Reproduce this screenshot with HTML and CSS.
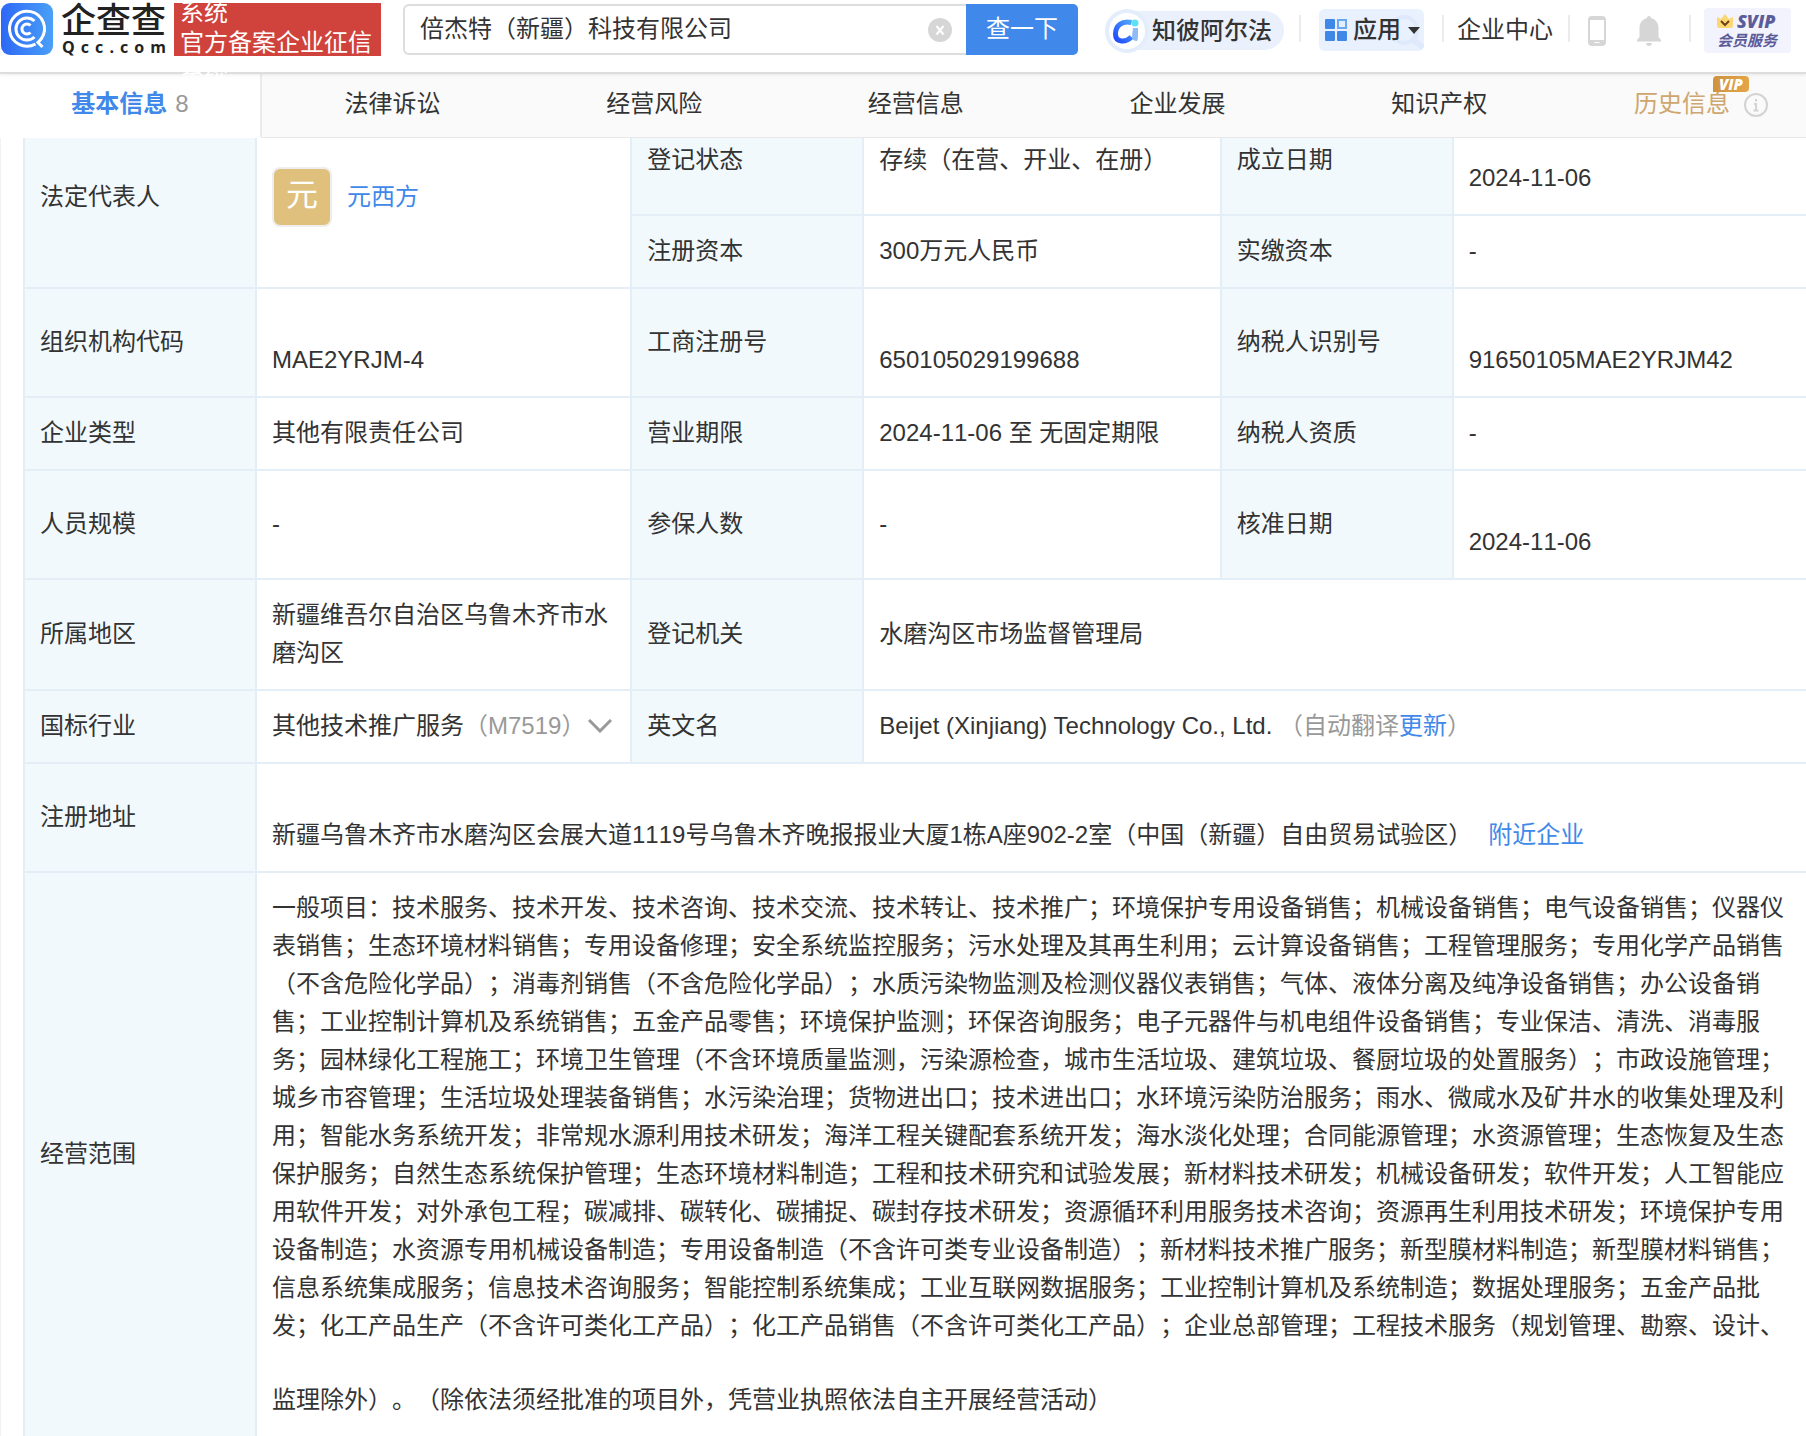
FILE: index.html
```html
<!DOCTYPE html>
<html lang="zh-CN">
<head>
<meta charset="utf-8">
<meta name="viewport" content="width=device-width, initial-scale=1">
<title>倍杰特（新疆）科技有限公司 - 企查查</title>
<link rel="stylesheet" href="styles.css">
</head>
<body>
<div class="page">
  <header class="topbar">
    <a class="logo" href="#" aria-label="企查查">
      <svg class="logo-mark" viewBox="0 0 52 52" aria-hidden="true">
        <defs><linearGradient id="lg" x1="0" y1="0" x2="1" y2="0"><stop offset="0" stop-color="#2e68f6"/><stop offset="1" stop-color="#4aa0f7"/></linearGradient></defs>
        <rect width="52" height="52" rx="9" fill="url(#lg)"/>
        <g fill="none" stroke="#fff" stroke-width="3">
          <path d="M34.500 41 A17.500 17.500 0 1 1 40.500 35.500 L37 39.500 L41.500 44"/>
          <path d="M33.500 18 A11 11 0 1 0 33.500 34"/>
          <path d="M29.500 22.500 A5 5 0 1 0 29.500 29.500"/>
        </g>
      </svg>
      <span class="logo-words"><span class="logo-cn">企查查</span><span class="logo-en"><span>Q</span><span>c</span><span>c</span><span>.</span><span>c</span><span>o</span><span>m</span></span></span>
    </a>
    <div class="slogan"><div class="slogan-lines">系统<br>官方备案企业征信<br>系统</div></div>

    <form class="search">
      <input type="text" aria-label="搜索企业" value="倍杰特（新疆）科技有限公司">
      <button type="button" class="clear" aria-label="清空"><svg viewBox="0 0 24 24" aria-hidden="true"><circle cx="12" cy="12" r="12" fill="#d6d6d6"/><path d="M8.500 8 L15.500 16.500 M15.500 8 L8.500 16.500" stroke="#fff" stroke-width="2"/></svg></button>
      <button type="button" class="go">查一下</button>
    </form>

    <a class="alpha" href="#">
      <svg viewBox="0 0 44 44" aria-hidden="true">
        <defs><linearGradient id="ag" x1="1" y1="0" x2="0" y2="1"><stop offset="0" stop-color="#4fa6fb"/><stop offset="1" stop-color="#1f49ff"/></linearGradient></defs>
        <circle cx="22" cy="22" r="22" fill="#e3edfc"/><circle cx="22" cy="22" r="18" fill="#fff"/>
        <path d="M26.500 13.500 C17 11 10.500 17 10.500 25 C10.500 34 21 33.500 26.500 28" fill="none" stroke="url(#ag)" stroke-width="5"/>
        <path d="M28 19 h5 v8 q0 3 -1 5 q-5 0 -5 -5z" fill="#8fbcf5"/>
        <circle cx="30" cy="14" r="3.500" fill="#5ce0f5"/>
      </svg>
      <span>知彼阿尔法</span>
    </a>
    <i class="sep sep-a"></i>
    <button type="button" class="apps">
      <svg class="apps-glass" viewBox="0 0 36 36" aria-hidden="true"><circle cx="16" cy="16" r="13" fill="none" stroke="#dfe9fc" stroke-width="4"/><path d="M26 26 L33 32" stroke="#dfe9fc" stroke-width="6" stroke-linecap="round"/></svg>
      <svg class="apps-grid" viewBox="0 0 22 22" aria-hidden="true"><g fill="#3f88e8"><rect width="10" height="10" rx="1"/><rect y="12" width="10" height="10" rx="1"/><rect x="12" y="12" width="10" height="10" rx="1"/></g><rect x="13" y="1" width="8" height="8" fill="#e4eefd" stroke="#6ba8f2" stroke-width="2"/></svg>
      <span>应用</span>
      <svg class="caret" viewBox="0 0 12 7" aria-hidden="true"><path d="M0 0h12L6 7z" fill="#333"/></svg>
    </button>
    <i class="sep sep-b"></i>
    <a class="center-link" href="#">企业中心</a>
    <i class="sep sep-c"></i>
    <a class="phone" href="#" aria-label="手机版"><svg viewBox="0 0 18 30" aria-hidden="true"><rect x="1" y="1" width="16" height="28" rx="3" fill="#fff" stroke="#d6d6d6" stroke-width="2"/><path d="M1 24h16v2q0 3-3 3H4q-3 0-3-3z M1 2h16v2H1z" fill="#d6d6d6"/><path d="M6.500 26.500h5" stroke="#fff" stroke-width="1"/></svg></a>
    <a class="bell" href="#" aria-label="消息"><svg viewBox="0 0 24 30" aria-hidden="true"><path d="M12 0c1.500 0 2 1 2 2 5 1.500 7.500 5 7.500 10v9L24 24v1.500H0V24l2.500-3v-9C2.500 7 5 3.500 10 2c0-1 .5-2 2-2z M9 27h6q-.5 3-3 3t-3-3z" fill="#d6d6d6"/></svg></a>
    <i class="sep sep-d"></i>
    <a class="svip" href="#">
      <span class="svip-top"><svg viewBox="0 0 16 14" aria-hidden="true"><path d="M0 3l4 2 4-5 4 5 4-2v9q0 2-2 2H2q-2 0-2-2z" fill="#fbd873"/><path d="M4 7l4 4 4-4" fill="none" stroke="#70401a" stroke-width="2"/></svg>SVIP</span>
      <span class="svip-sub">会员服务</span>
    </a>
  </header>

  <nav class="tabs">
    <a class="tab active" href="#"><b>基本信息</b><span class="count">8</span></a>
    <a class="tab" href="#">法律诉讼</a>
    <a class="tab" href="#">经营风险</a>
    <a class="tab" href="#">经营信息</a>
    <a class="tab" href="#">企业发展</a>
    <a class="tab" href="#">知识产权</a>
    <a class="tab history" href="#"><span class="history-text">历史信息<span class="vip">VIP</span></span>
      <svg class="info" viewBox="0 0 24 24" aria-hidden="true"><circle cx="12" cy="12" r="11" fill="none" stroke="#d3d3d3" stroke-width="2"/><path d="M12 6v2.500M10 11h2v6M9.500 17.500h5" fill="none" stroke="#d3d3d3" stroke-width="2"/></svg></a>
  </nav>

  <main class="content">
    <table class="info-table">
      <colgroup><col class="c-label"><col class="c-v1"><col class="c-label"><col class="c-v2"><col class="c-label"><col></colgroup>
      <tbody>
      <tr>
        <th scope="row" rowspan="2">法定代表人</th>
        <td rowspan="2"><div class="person"><span class="avatar">元</span><a href="#">元西方</a></div></td>
        <th scope="row">登记状态</th><td>存续（在营、开业、在册）</td>
        <th scope="row">成立日期</th><td class="low">2024-11-06</td>
      </tr>
      <tr><th scope="row">注册资本</th><td>300万元人民币</td><th scope="row">实缴资本</th><td>-</td></tr>
      <tr><th scope="row">组织机构代码</th><td class="low">MAE2YRJM-4</td><th scope="row">工商注册号</th><td class="low">650105029199688</td><th scope="row">纳税人识别号</th><td class="low">91650105MAE2YRJM42</td></tr>
      <tr><th scope="row">企业类型</th><td>其他有限责任公司</td><th scope="row">营业期限</th><td>2024-11-06 至 无固定期限</td><th scope="row">纳税人资质</th><td>-</td></tr>
      <tr><th scope="row">人员规模</th><td>-</td><th scope="row">参保人数</th><td>-</td><th scope="row">核准日期</th><td class="low">2024-11-06</td></tr>
      <tr><th scope="row">所属地区</th><td>新疆维吾尔自治区乌鲁木齐市水磨沟区</td><th scope="row">登记机关</th><td colspan="3">水磨沟区市场监督管理局</td></tr>
      <tr><th scope="row">国标行业</th><td><div class="industry"><span>其他技术推广服务<span class="muted">（M7519）</span></span><svg viewBox="0 0 24 14" aria-hidden="true"><path d="M1 1l11 11L23 1" fill="none" stroke="#999" stroke-width="3"/></svg></div></td><th scope="row">英文名</th><td class="latin" colspan="3">Beijet (Xinjiang) Technology Co., Ltd. <span class="muted">（自动翻译<a href="#">更新</a>）</span></td></tr>
      <tr><th scope="row">注册地址</th><td class="low" colspan="5">新疆乌鲁木齐市水磨沟区会展大道1119号乌鲁木齐晚报报业大厦1栋A座902-2室（中国（新疆）自由贸易试验区）<a class="nearby" href="#">附近企业</a></td></tr>
      <tr><th scope="row">经营范围</th><td colspan="5"><p>一般项目：技术服务、技术开发、技术咨询、技术交流、技术转让、技术推广；环境保护专用设备销售；机械设备销售；电气设备销售；仪器仪表销售；生态环境材料销售；专用设备修理；安全系统监控服务；污水处理及其再生利用；云计算设备销售；工程管理服务；专用化学产品销售（不含危险化学品）；消毒剂销售（不含危险化学品）；水质污染物监测及检测仪器仪表销售；气体、液体分离及纯净设备销售；办公设备销售；工业控制计算机及系统销售；五金产品零售；环境保护监测；环保咨询服务；电子元器件与机电组件设备销售；专业保洁、清洗、消毒服务；园林绿化工程施工；环境卫生管理（不含环境质量监测，污染源检查，城市生活垃圾、建筑垃圾、餐厨垃圾的处置服务）；市政设施管理；城乡市容管理；生活垃圾处理装备销售；水污染治理；货物进出口；技术进出口；水环境污染防治服务；雨水、微咸水及矿井水的收集处理及利用；智能水务系统开发；非常规水源利用技术研发；海洋工程关键配套系统开发；海水淡化处理；合同能源管理；水资源管理；生态恢复及生态保护服务；自然生态系统保护管理；生态环境材料制造；工程和技术研究和试验发展；新材料技术研发；机械设备研发；软件开发；人工智能应用软件开发；对外承包工程；碳减排、碳转化、碳捕捉、碳封存技术研发；资源循环利用服务技术咨询；资源再生利用技术研发；环境保护专用设备制造；水资源专用机械设备制造；专用设备制造（不含许可类专业设备制造）；新材料技术推广服务；新型膜材料制造；新型膜材料销售；信息系统集成服务；信息技术咨询服务；智能控制系统集成；工业互联网数据服务；工业控制计算机及系统制造；数据处理服务；五金产品批发；化工产品生产（不含许可类化工产品）；化工产品销售（不含许可类化工产品）；企业总部管理；工程技术服务（规划管理、勘察、设计、</p><p class="tail">监理除外）。（除依法须经批准的项目外，凭营业执照依法自主开展经营活动）</p></td></tr>
      </tbody>
    </table>
  </main>

  <svg class="watermark" aria-hidden="true">
    <defs><pattern id="wm" width="210" height="120" patternUnits="userSpaceOnUse" patternTransform="translate(133 209) rotate(-45)"><text x="4" y="88" font-size="24">E E M U 3 Q D</text></pattern></defs>
    <rect width="100%" height="100%" fill="url(#wm)"/>
  </svg>
</div>
</body>
</html>
```
FILE: styles.css
```css
* { box-sizing: border-box; }

body {
  margin: 0;
  background: #fff;
  color: #333;
  font: 24px/38px "Liberation Sans", "Noto Sans CJK SC", sans-serif;
  text-spacing-trim: space-all;
}

a { color: #4088e9; text-decoration: none; }
button, input { font: inherit; color: inherit; border: 0; padding: 0; margin: 0; }
p { margin: 0; }
svg { display: block; flex: none; }

.page { position: relative; height: 100vh; overflow: hidden; }

/* top bar */
.topbar {
  position: relative;
  z-index: 3;
  display: flex;
  align-items: flex-start;
  height: 74px;
  padding: 3px 15px 0 1px;
  background: #fff;
  border-bottom: 2px solid #ddd;
  box-shadow: 0 1px 3px rgba(0, 0, 0, .08);
  white-space: nowrap;
}
.topbar > * { flex: none; }

.logo { display: flex; gap: 8px; color: #222; }
.logo-mark { width: 52px; height: 52px; }
.logo-words { display: flex; flex-direction: column; width: 106px; }
.logo-cn { font-size: 35px; line-height: 36px; font-weight: 500; }
.logo-en {
  display: flex;
  justify-content: space-between;
  padding: 0 1px 0 1px;
  font: bold 16px/16px "Open Sans", sans-serif;
}

.slogan {
  width: 207px;
  height: 53px;
  margin-left: 7px;
  padding-left: 6px;
  background: #d0433d;
  color: #fff;
}
.slogan-lines { margin-top: -5px; line-height: 30px; }

.search {
  position: relative;
  display: flex;
  flex: 1 1 auto;
  height: 51px;
  margin: 1px 0 0 22px;
}
.search input {
  flex: 1;
  min-width: 0;
  padding: 0 60px 2px 15px;
  border: 2px solid #ddd;
  border-right: 0;
  border-radius: 6px 0 0 6px;
  background: #fff;
}
.go { width: 112px; padding-bottom: 2px; background: #4088e9; color: #fff; border-radius: 0 5px 5px 0; }
.clear { position: absolute; right: 126px; top: 14px; background: none; }
.clear svg { width: 24px; height: 24px; }

.alpha {
  display: flex;
  align-items: center;
  height: 39px;
  margin: 8px 0 0 27px;
  padding-right: 12px;
  border-radius: 20px;
  background: #eaf1fd;
  color: #333;
  font-weight: 500;
}
.alpha svg { width: 44px; height: 44px; }
.alpha span { margin-left: 3px; }

.sep { width: 2px; height: 27px; margin-top: 12px; background: #ebebeb; }
.sep-a { margin-left: 15px; }
.sep-b { margin-left: 18px; }
.sep-c { margin-left: 15px; }
.sep-d { margin-left: 28px; }

.apps {
  position: relative;
  display: flex;
  align-items: center;
  width: 105px;
  height: 42px;
  margin: 6px 0 0 18px;
  padding-left: 6px;
  border-radius: 6px;
  background: #e9f0fe;
  font-weight: 500;
}
.apps span { position: relative; margin: 0 7px 0 6px; }
.apps-grid { width: 22px; height: 22px; }
.apps-glass { position: absolute; right: 0; top: 5px; width: 36px; height: 36px; }
.caret { position: relative; width: 12px; height: 7px; }

.center-link { margin: 8px 0 0 13px; color: #333; }
.phone { margin: 13px 0 0 18px; }
.phone svg { width: 18px; height: 30px; }
.bell { margin: 13px 0 0 31px; }
.bell svg { width: 24px; height: 30px; }

.svip {
  display: flex;
  flex-direction: column;
  width: 87px;
  height: 45px;
  margin: 5px 0 0 13px;
  padding: 3px 0 0 13px;
  border-radius: 4px;
  background: #f3f3fe;
  color: #5c5c99;
  font-weight: bold;
  font-style: italic;
}
.svip-top { display: flex; align-items: center; gap: 4px; font: italic 800 18px/20px "Open Sans", sans-serif; }
.svip-top svg { width: 16px; height: 14px; }
.svip-sub { font-size: 15px; line-height: 20px; }

/* section tabs */
.tabs {
  position: relative;
  z-index: 2;
  display: grid;
  grid-template-columns: repeat(6, 1fr) 236px;
  height: 64px;
  background: #fafafa;
}
.tab {
  display: flex;
  justify-content: center;
  padding-top: 11px;
  border-bottom: 1px solid #e8e8e8;
  color: #333;
}
.tab.active { background: #fff; border-right: 2px solid #ebebeb; border-bottom-color: #fff; color: #4088e9; }
.count { margin-left: 8px; color: #999; }
.tab.history { justify-content: flex-start; padding-left: 64px; color: #cfa66e; }
.history-text { position: relative; }
.info { width: 24px; height: 24px; margin: 8px 0 0 14px; }
.vip {
  position: absolute;
  left: 79px;
  top: -9px;
  width: 36px;
  height: 16px;
  border-radius: 4px 4px 4px 0;
  background: linear-gradient(90deg, #cf9340, #e5a548);
  color: #fff;
  font: italic 800 15px/16px "Open Sans", sans-serif;
  text-align: center;
}

/* registration table, scrolled partly under the tabs */
.content { margin-top: -33px; padding-left: 22px; border-left: 1px solid #f2f2f2; }
.info-table {
  width: calc(100% + 6px);
  table-layout: fixed;
  border-collapse: collapse;
}
.c-label { width: 232px; }
.c-v1 { width: 21%; }
.c-v2 { width: 20%; }
.info-table th,
.info-table td {
  padding: 16px 15px 17px;
  border: 2px solid #e4eef6;
  text-align: left;
  vertical-align: middle;
  font-weight: normal;
}
.info-table th { background: #f2f9fd; }
.info-table td { font-kerning: none; }
.info-table td.latin { font-kerning: normal; }
.info-table td.low { padding-top: 52px; }

.person { display: flex; align-items: center; gap: 15px; }
.avatar {
  width: 60px;
  height: 60px;
  border: 2px solid #eee;
  border-radius: 8px;
  background: #dfc07c;
  color: #fff;
  font-size: 32px;
  line-height: 52px;
  text-align: center;
}
.industry { display: flex; align-items: center; gap: 3px; white-space: nowrap; }
.industry svg { width: 24px; height: 14px; }
.muted { color: #999; }
.nearby { margin-left: 16px; }
.tail { margin-top: 36px; }

.watermark {
  position: absolute;
  z-index: 4;
  inset: 0;
  width: 100%;
  height: 100%;
  pointer-events: none;
  fill: #000;
  fill-opacity: .015;
}
```
